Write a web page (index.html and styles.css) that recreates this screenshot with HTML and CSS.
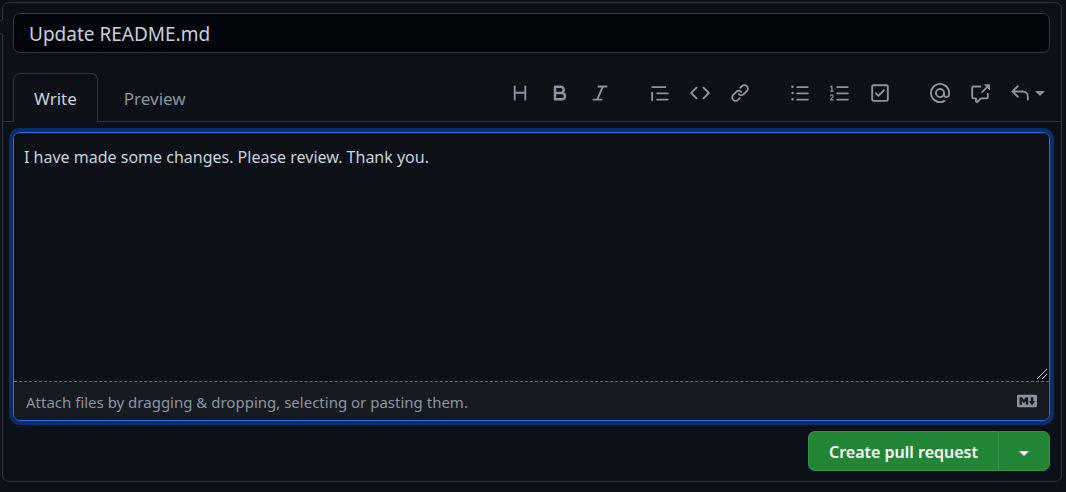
FILE: index.html
```html
<!DOCTYPE html>
<html lang="en">
<head>
<meta charset="utf-8">
<meta name="viewport" content="width=device-width, initial-scale=1">
<title>Open a pull request</title>
<link rel="stylesheet" href="styles.css">
</head>
<body>
<form class="panel">
  <svg class="pointer" viewBox="0 0 4 18" aria-hidden="true"><rect width="4" height="18" fill="#0d1117"/><path d="M3.500 0Q3.500 1.500 0 3M0 15.500Q2.500 16 3.500 18" fill="none" stroke="#30363d"/></svg>
  <input class="title" type="text" aria-label="Title" value="Update README.md">
  <div class="tabs">
    <div class="tablist" role="tablist">
      <button class="tab tab-active" type="button" role="tab" aria-selected="true">Write</button>
      <button class="tab" type="button" role="tab" aria-selected="false">Preview</button>
    </div>
    <div class="toolbar" role="toolbar" aria-label="Formatting">
      <div class="group">
        <button class="tool" type="button" aria-label="Heading"><svg class="icon" viewBox="0 0 16 16"><path d="M3.750 2a.75.75 0 01.75.75V7h7V2.750a.75.75 0 011.500 0v10.500a.75.75 0 01-1.500 0V8.500h-7v4.750a.75.75 0 01-1.500 0V2.750A.75.75 0 013.750 2z"/></svg></button>
        <button class="tool" type="button" aria-label="Bold"><svg class="icon" viewBox="0 0 16 16"><path fill-rule="evenodd" d="M4 2a1 1 0 00-1 1v10a1 1 0 001 1h5.500a3.500 3.500 0 001.852-6.470A3.500 3.500 0 008.500 2H4zm4.500 5a1.500 1.500 0 100-3H5v3h3.500zM5 9v3h4.500a1.500 1.500 0 000-3H5z"/></svg></button>
        <button class="tool" type="button" aria-label="Italic"><svg class="icon" viewBox="0 0 16 16"><path d="M6 2.750A.75.75 0 016.750 2h6.500a.75.75 0 010 1.500h-2.505l-3.858 9H9.250a.75.75 0 010 1.500h-6.500a.75.75 0 010-1.500h2.505l3.858-9H6.750A.75.75 0 016 2.750z"/></svg></button>
      </div>
      <div class="group">
        <button class="tool" type="button" aria-label="Quote"><svg class="icon" viewBox="0 0 16 16"><path d="M1.750 2.500a.75.75 0 000 1.500h10.500a.75.75 0 000-1.500H1.750zm4 5a.75.75 0 000 1.500h8.500a.75.75 0 000-1.500h-8.500zm0 5a.75.75 0 000 1.500h8.500a.75.75 0 000-1.500h-8.500zM2.500 7.750a.75.75 0 00-1.500 0v6a.75.75 0 001.500 0v-6z"/></svg></button>
        <button class="tool" type="button" aria-label="Code"><svg class="icon" viewBox="0 0 16 16"><path d="M4.720 3.220a.75.75 0 011.060 1.060L2.060 8l3.720 3.720a.75.75 0 11-1.060 1.060L.47 8.530a.75.75 0 010-1.060l4.250-4.250zm6.560 0a.75.75 0 10-1.060 1.060L13.940 8l-3.720 3.720a.75.75 0 101.060 1.060l4.250-4.250a.75.75 0 000-1.060l-4.250-4.250z"/></svg></button>
        <button class="tool" type="button" aria-label="Link"><svg class="icon" viewBox="0 0 16 16"><path d="M7.775 3.275a.75.75 0 001.060 1.060l1.250-1.250a2 2 0 112.830 2.830l-2.500 2.500a2 2 0 01-2.830 0 .75.75 0 00-1.060 1.060 3.500 3.500 0 004.950 0l2.500-2.500a3.500 3.500 0 00-4.950-4.950l-1.250 1.250zm-4.690 9.640a2 2 0 010-2.830l2.500-2.500a2 2 0 012.830 0 .75.75 0 001.060-1.060 3.500 3.500 0 00-4.950 0l-2.500 2.500a3.500 3.500 0 004.950 4.950l1.250-1.250a.75.75 0 00-1.060-1.060l-1.250 1.250a2 2 0 01-2.830 0z"/></svg></button>
      </div>
      <div class="group">
        <button class="tool" type="button" aria-label="Bulleted list"><svg class="icon" viewBox="0 0 16 16"><path d="M2 4a1 1 0 100-2 1 1 0 000 2zm3.750-1.500a.75.75 0 000 1.500h8.500a.75.75 0 000-1.500h-8.500zm0 5a.75.75 0 000 1.500h8.500a.75.75 0 000-1.500h-8.500zm0 5a.75.75 0 000 1.500h8.500a.75.75 0 000-1.500h-8.500zM3 8a1 1 0 11-2 0 1 1 0 012 0zm-1 6a1 1 0 100-2 1 1 0 000 2z"/></svg></button>
        <button class="tool" type="button" aria-label="Numbered list"><svg class="icon" viewBox="0 0 16 16"><path d="M2.003 2.500a.5.5 0 00-.723-.447l-1.003.5a.5.5 0 00.446.895l.28-.14V6H.5a.5.5 0 000 1h2.006a.5.5 0 100-1h-.503V2.500zM5 3.250a.75.75 0 01.75-.75h8.500a.75.75 0 010 1.500h-8.500A.75.75 0 015 3.250zm0 5a.75.75 0 01.75-.75h8.500a.75.75 0 010 1.500h-8.500A.75.75 0 015 8.250zm0 5a.75.75 0 01.75-.75h8.500a.75.75 0 010 1.500h-8.500a.75.75 0 01-.75-.75z"/><path d="M.5 10.200Q1 9.500 1.600 9.500C2.200 9.500 2.500 10 2.500 10.500C2.500 12 .5 12 .5 13.500H2.500" fill="none" stroke="currentColor" stroke-linecap="round" stroke-linejoin="round"/></svg></button>
        <button class="tool" type="button" aria-label="Task list"><svg class="icon" viewBox="0 0 16 16"><path fill-rule="evenodd" d="M2.500 2.750a.25.25 0 01.25-.25h10.500a.25.25 0 01.25.25v10.500a.25.25 0 01-.25.25H2.750a.25.25 0 01-.25-.25V2.750zM2.750 1A1.750 1.750 0 001 2.750v10.500c0 .966.784 1.750 1.750 1.750h10.500A1.750 1.750 0 0015 13.250V2.750A1.750 1.750 0 0013.250 1H2.750zm9.030 5.280a.75.75 0 00-1.060-1.060L6.750 9.190 5.280 7.720a.75.75 0 00-1.060 1.060l2 2a.75.75 0 001.060 0l4.500-4.500z"/></svg></button>
      </div>
      <div class="group">
        <button class="tool" type="button" aria-label="Mention"><svg class="icon" viewBox="0 0 16 16"><path fill-rule="evenodd" d="M4.750 2.370a6.500 6.500 0 006.500 11.260.75.75 0 01.75 1.298 8 8 0 113.994-7.273.754.754 0 01.006.095v1.500a2.750 2.750 0 01-5.072 1.475A4 4 0 1112 8v1.250a1.250 1.250 0 002.500 0V7.867a6.500 6.500 0 00-9.750-5.496V2.370zM10.500 8a2.500 2.500 0 10-5 0 2.500 2.500 0 005 0z"/></svg></button>
        <button class="tool" type="button" aria-label="Reference"><svg class="icon" viewBox="0 0 16 16"><path d="M16 1.250v4.146a.25.25 0 01-.427.177L14.030 4.030l-3.750 3.750a.75.75 0 11-1.060-1.060l3.750-3.750-1.543-1.543A.25.25 0 0111.604 1h4.146a.25.25 0 01.25.25zM2.750 3.500a.25.25 0 00-.25.25v7.500c0 .138.112.25.25.25h2a.75.75 0 01.75.75v2.190l2.720-2.720a.75.75 0 01.53-.22h4.500a.25.25 0 00.25-.25v-2.500a.75.75 0 111.500 0v2.500A1.750 1.750 0 0113.250 13H9.060l-2.573 2.573A1.457 1.457 0 014 14.543V13H2.750A1.750 1.750 0 011 11.250v-7.500C1 2.784 1.784 2 2.750 2h5.500a.75.75 0 010 1.500h-5.500z"/></svg></button>
        <button class="tool tool-menu" type="button" aria-label="Saved replies"><svg class="icon" viewBox="0 0 16 16"><path d="M6.780 1.970a.75.75 0 010 1.060L3.810 6h6.440A4.750 4.750 0 0115 10.750v2.500a.75.75 0 01-1.500 0v-2.500a3.250 3.250 0 00-3.250-3.250H3.810l2.970 2.970a.75.75 0 11-1.060 1.060L1.470 7.280a.75.75 0 010-1.060l4.250-4.250a.75.75 0 011.060 0z"/></svg><span class="caret"></span></button>
      </div>
    </div>
  </div>
  <div class="editor">
    <textarea class="message" aria-label="Description" spellcheck="false">I have made some changes. Please review. Thank you.</textarea>
    <div class="attach">
      <label for="files">Attach files by dragging &amp; dropping, selecting or pasting them.</label>
      <input id="files" type="file" hidden>
      <a class="markdown" href="#markdown" aria-label="Markdown is supported"><svg class="icon" viewBox="0 0 16 16"><path fill-rule="evenodd" d="M14.850 3H1.150C.52 3 0 3.520 0 4.150v7.690C0 12.480.52 13 1.150 13h13.690c.64 0 1.150-.52 1.150-1.150v-7.700C16 3.520 15.480 3 14.850 3zM9 11H7V8L5.500 9.920 4 8v3H2V5h2l1.500 2L7 5h2v6zm2.990.5L9.500 8H11V5h2v3h1.500l-2.510 3.500z"/></svg></a>
    </div>
  </div>
  <div class="actions">
    <button class="create" type="button">Create pull request</button>
    <button class="options" type="button" aria-label="Select a type of pull request"><span class="caret"></span></button>
  </div>
</form>
</body>
</html>
```
FILE: styles.css
```css
* { box-sizing: border-box; }

body {
  margin: 0;
  padding: 2px 4px 10px 2px;
  background: #0d1117;
  color: #c9d1d9;
  color-scheme: dark;
  font-family: "Segoe UI", "Noto Sans", sans-serif;
  font-size: 16px;
  line-height: 24px;
}

button, input, textarea { font: inherit; color: inherit; }
button { cursor: pointer; }

.panel {
  position: relative;
  border: 1px solid #30363d;
  border-radius: 7px;
  padding: 10px 0;
}

.pointer {
  position: absolute;
  left: -3px;
  top: 15px;
  width: 4px;
  height: 18px;
}

.title {
  display: block;
  width: calc(100% - 21px);
  height: 40px;
  margin: 0 11px 20px 10px;
  padding: 2px 15px 0;
  background: #010409;
  border: 1px solid #30363d;
  border-radius: 7px;
  font-size: 19px;
  outline: none;
}

.tabs {
  display: flex;
  justify-content: space-between;
  padding: 0 11px 0 10px;
  border-bottom: 1px solid #30363d;
}

.tablist { display: flex; gap: 5px; margin-bottom: -1px; }

.tab {
  height: 49px;
  padding: 2px 20px 0;
  background: none;
  border: 1px solid transparent;
  border-bottom: 0;
  border-radius: 7px 7px 0 0;
  color: #8b949e;
  font-size: 17px;
}

.tab-active { background: #0d1117; border-color: #30363d; color: #c9d1d9; }

.toolbar { display: flex; gap: 20px; height: 40px; }
.group { display: flex; }

.tool {
  display: flex;
  align-items: center;
  padding: 0 10px;
  background: none;
  border: 0;
  color: #8b949e;
}

.tool-menu { gap: 5px; padding-right: 5px; }

.icon { display: block; width: 20px; height: 20px; fill: currentColor; }

.caret {
  border: 5px solid transparent;
  border-top-color: currentColor;
  border-bottom: 0;
}

.editor {
  margin: 10px 11px 10px 10px;
  border: 1px solid #1f6feb;
  border-radius: 7px;
  box-shadow: 0 0 0 4px #0c2d6b;
}

.message {
  display: block;
  width: 100%;
  height: 248px;
  padding: 12px 10px;
  background: #0d1117;
  border: 0;
  border-radius: 6px 6px 0 0;
  outline: none;
  resize: vertical;
}

.message::-webkit-resizer {
  background: linear-gradient(135deg, transparent 46%, #c9d1d9 46%, #c9d1d9 51%, transparent 51%, transparent 73%, #c9d1d9 73%, #c9d1d9 78%, transparent 78%) 3px 3px / 10px 10px no-repeat;
}

.attach {
  display: flex;
  align-items: center;
  justify-content: space-between;
  height: 39px;
  padding: 0 12px;
  background: #161b22;
  border-top: 1px dashed #1f6feb;
  border-radius: 0 0 6px 6px;
  color: #8b949e;
  font-size: 15px;
}

.attach label { padding-top: 2px; }

.markdown { color: #8b949e; }

.actions { display: flex; justify-content: flex-end; padding-right: 11px; }

.create, .options {
  height: 40px;
  background: #238636;
  border: 1px solid #37914a;
  color: #fff;
}

.create {
  padding: 2px 20px 0;
  border-right: 0;
  border-radius: 7px 0 0 7px;
  font-weight: 600;
}

.options {
  display: flex;
  align-items: center;
  padding: 4px 20px 0;
  border-radius: 0 7px 7px 0;
}
```
